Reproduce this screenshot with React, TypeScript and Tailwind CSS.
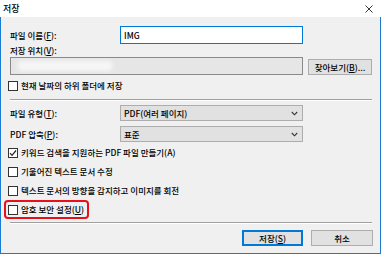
import React from 'react'

const font = { fontFamily: '"Noto Sans CJK KR", "Noto Sans", sans-serif' }

const Check = ({ checked }: { checked?: boolean }) => (
    <span className="flex w-[10px] h-[10px] shrink-0 items-center justify-center border border-[#333] bg-white">
        {checked && (
            <svg width="8" height="8" viewBox="0 0 8 8">
                <path d="M1 4.2 L3 6.3 L7 1.5" fill="none" stroke="#222" strokeWidth="1.2" />
            </svg>
        )}
    </span>
)

const Chevron = () => (
    <svg width="7" height="5" viewBox="0 0 7 5">
        <path d="M0.8 1 L3.5 3.8 L6.2 1" fill="none" stroke="#333" strokeWidth="1.1" />
    </svg>
)

const Sep = () => <div className="h-[2px] mr-[1px] border-t border-[#a0a0a0] border-b border-b-white" />

const CheckRow = ({ label, checked }: { label: string; checked?: boolean }) => (
    <div className="flex h-[19px] items-center gap-[3px] -ml-[2px]">
        <Check checked={checked} />
        <span>{label}</span>
    </div>
)

const Select = ({ value }: { value: string }) => (
    <div className="flex w-[183px] h-[16px] items-center justify-between border border-[#adadad] bg-[#e1e1e1] pl-[3px] pr-[4px]">
        <span>{value}</span>
        <Chevron />
    </div>
)

export default function App() {
    return (
        <div style={font} className="w-[381px] h-[254px] bg-[#f0f0f0] text-[8.5px] font-medium leading-none text-black overflow-hidden flex flex-col">
            <div className="flex h-[17px] shrink-0 items-center justify-between bg-white pl-[3px] pr-[8px]">
                <span className="text-[9px]">저장</span>
                <svg width="8" height="8" viewBox="0 0 8 8">
                    <path d="M0.5 0.5 L7.5 7.5 M7.5 0.5 L0.5 7.5" stroke="#222" strokeWidth="0.9" />
                </svg>
            </div>

            <div className="flex flex-1 flex-col border-x border-b border-[#1a7ad4] pl-[9px] pr-[7px]">
                <div className="mt-[9px] flex h-[18px] items-center">
                    <span className="w-[110px]">파일 이름(<u>F</u>):</span>
                    <div className="flex w-[183px] h-[18px] items-center border border-[#0078d7] bg-white pl-[3px]">IMG</div>
                </div>

                <div className="flex h-[13px] items-center">저장 위치(<u>V</u>):</div>

                <div className="flex h-[18px] items-end gap-[5px]">
                    <div className="relative w-[293px] h-[18px] overflow-hidden border border-[#8a8a8a] bg-[#e6e6e6]">
                        <div className="absolute left-[6px] top-[3px] w-[96px] h-[10px] rounded-full bg-[#f6f6f6] blur-[2px]" />
                    </div>
                    <div className="flex w-[64px] h-[16px] items-center justify-center border border-[#adadad] bg-[#e1e1e1]">찾아보기(<u>B</u>)...</div>
                </div>

                <div className="mt-[2px]">
                    <div className="flex h-[17px] items-center gap-[3px] -ml-[2px]">
                        <Check />
                        <span>현재 날짜의 하위 폴더에 저장</span>
                    </div>
                </div>

                <div className="mt-[5px]"><Sep /></div>

                <div className="mt-[4px] flex h-[16px] items-center">
                    <span className="w-[110px]">파일 유형(<u>T</u>):</span>
                    <Select value="PDF(여러 페이지)" />
                </div>
                <div className="mt-[5px] flex h-[16px] items-center">
                    <span className="w-[110px]">PDF 압축(<u>P</u>):</span>
                    <Select value="표준" />
                </div>

                <div className="mt-[1px] flex flex-col">
                    <CheckRow checked label="키워드 검색을 지원하는 PDF 파일 만들기(A)" />
                    <CheckRow label="기울어진 텍스트 문서 수정" />
                    <CheckRow label="텍스트 문서의 방향을 감지하고 이미지를 회전" />
                    <div className="flex h-[19px] w-fit items-center gap-[3px] -ml-[6px] rounded-[4px] border-2 border-[#e8101a] pl-[2px] pr-[3px]">
                        <Check />
                        <span>암호 보안 설정(<u>U</u>)</span>
                    </div>
                </div>

                <div className="mt-[3px]"><Sep /></div>

                <div className="mt-[6px] flex justify-end gap-[8px]">
                    <div className="flex w-[61px] h-[16px] items-center justify-center border-2 border-[#0078d7] bg-[#e1e1e1]">저장(<u>S</u>)</div>
                    <div className="flex w-[62px] h-[16px] items-center justify-center border border-[#adadad] bg-[#e1e1e1]">취소</div>
                </div>
            </div>
        </div>
    )
}
